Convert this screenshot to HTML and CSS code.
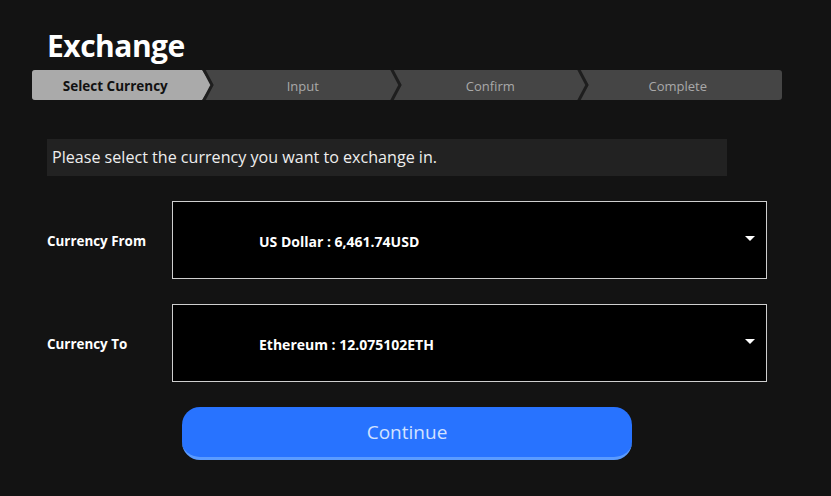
FILE: index.html
```html
<!DOCTYPE html>
<html lang="en">
<head>
<meta charset="utf-8">
<title>Exchange</title>
<link rel="stylesheet" href="styles.css">
</head>
<body>
<div class="page">
  <h1 class="title">Exchange</h1>
  <ol class="steps">
    <li class="step active"><span>Select Currency</span>
      <svg class="chev" width="16" height="30" viewBox="0 0 16 30"><polygon points="0,0 10,15 0,30" fill="#aaaaaa"/><polyline points="1.5,-1 10,15 1.5,31" fill="none" stroke="#1e1e1e" stroke-width="3"/></svg>
    </li>
    <li class="step"><span>Input</span>
      <svg class="chev" width="16" height="30" viewBox="0 0 16 30"><polyline points="1.5,-1 10,15 1.5,31" fill="none" stroke="#1e1e1e" stroke-width="3"/></svg>
    </li>
    <li class="step"><span>Confirm</span>
      <svg class="chev" width="16" height="30" viewBox="0 0 16 30"><polyline points="1.5,-1 10,15 1.5,31" fill="none" stroke="#1e1e1e" stroke-width="3"/></svg>
    </li>
    <li class="step"><span>Complete</span></li>
  </ol>
  <div class="content">
    <p class="notice">Please select the currency you want to exchange in.</p>
    <div class="field">
      <label class="field-label">Currency From</label>
      <div class="select">
        <span class="select-value">US Dollar : 6,461.74USD</span>
        <span class="caret"></span>
      </div>
    </div>
    <div class="field">
      <label class="field-label">Currency To</label>
      <div class="select">
        <span class="select-value">Ethereum : 12.075102ETH</span>
        <span class="caret"></span>
      </div>
    </div>
    <div class="actions">
      <button class="btn-continue" type="button">Continue</button>
    </div>
  </div>
</div>
</body>
</html>
```
FILE: styles.css
```css
* { box-sizing: border-box; }
html, body {
  margin: 0;
  padding: 0;
  background: #131313;
  color: #fff;
  font-family: "Open Sans", "Noto Sans", sans-serif;
}
.page {
  width: 831px;
  height: 496px;
  padding: 26px 0 0 32px;
}
.title {
  margin: 0 0 0 15px;
  font-size: 30px;
  line-height: 40px;
  font-weight: 700;
  letter-spacing: -0.5px;
}
.steps {
  list-style: none;
  margin: 4px 0 0 0;
  padding: 0;
  width: 750px;
  height: 30px;
  display: flex;
  background: #454545;
  border-radius: 3px;
  overflow: hidden;
}
.step {
  flex: 1;
  position: relative;
  display: flex;
  align-items: center;
  justify-content: center;
  padding-right: 21px;
  padding-top: 1px;
  font-size: 13px;
  color: #a9a9a9;
}
.step.active {
  background: linear-gradient(to right, #aaaaaa 170px, transparent 170px);
  color: #111;
  font-weight: 700;
  font-size: 13.5px;
}
.chev {
  position: absolute;
  left: 170px;
  top: 0;
}
.content {
  padding-left: 15px;
  width: 735px;
}
.notice {
  margin: 39px 0 0 0;
  width: 680px;
  height: 37px;
  padding: 0 5px;
  background: #222;
  color: #eee;
  font-size: 16.1px;
  line-height: 37px;
}
.field {
  display: flex;
  align-items: center;
  margin-top: 25px;
}
.field-label {
  width: 125px;
  font-size: 13.4px;
  font-weight: 700;
  padding-top: 2px;
}
.select {
  width: 595px;
  height: 78px;
  border: 1px solid #cfcfcf;
  background: #000;
  display: flex;
  align-items: center;
  padding: 0 11px 0 86px;
}
.select-value {
  flex: 1;
  font-size: 14px;
  font-weight: 700;
  padding-top: 2px;
}
.caret {
  width: 0;
  height: 0;
  border-left: 5.5px solid transparent;
  border-right: 5.5px solid transparent;
  border-top: 5px solid #fff;
  margin-top: -3px;
}
.actions {
  width: 720px;
  display: flex;
  justify-content: center;
  margin-top: 25px;
}
.btn-continue {
  width: 450px;
  height: 53px;
  border: 0;
  border-bottom: 3px solid #5b9bff;
  border-radius: 18px;
  background: #2873ff;
  color: #d2e2ff;
  font-family: inherit;
  font-size: 19px;
  padding: 0;
}
```
